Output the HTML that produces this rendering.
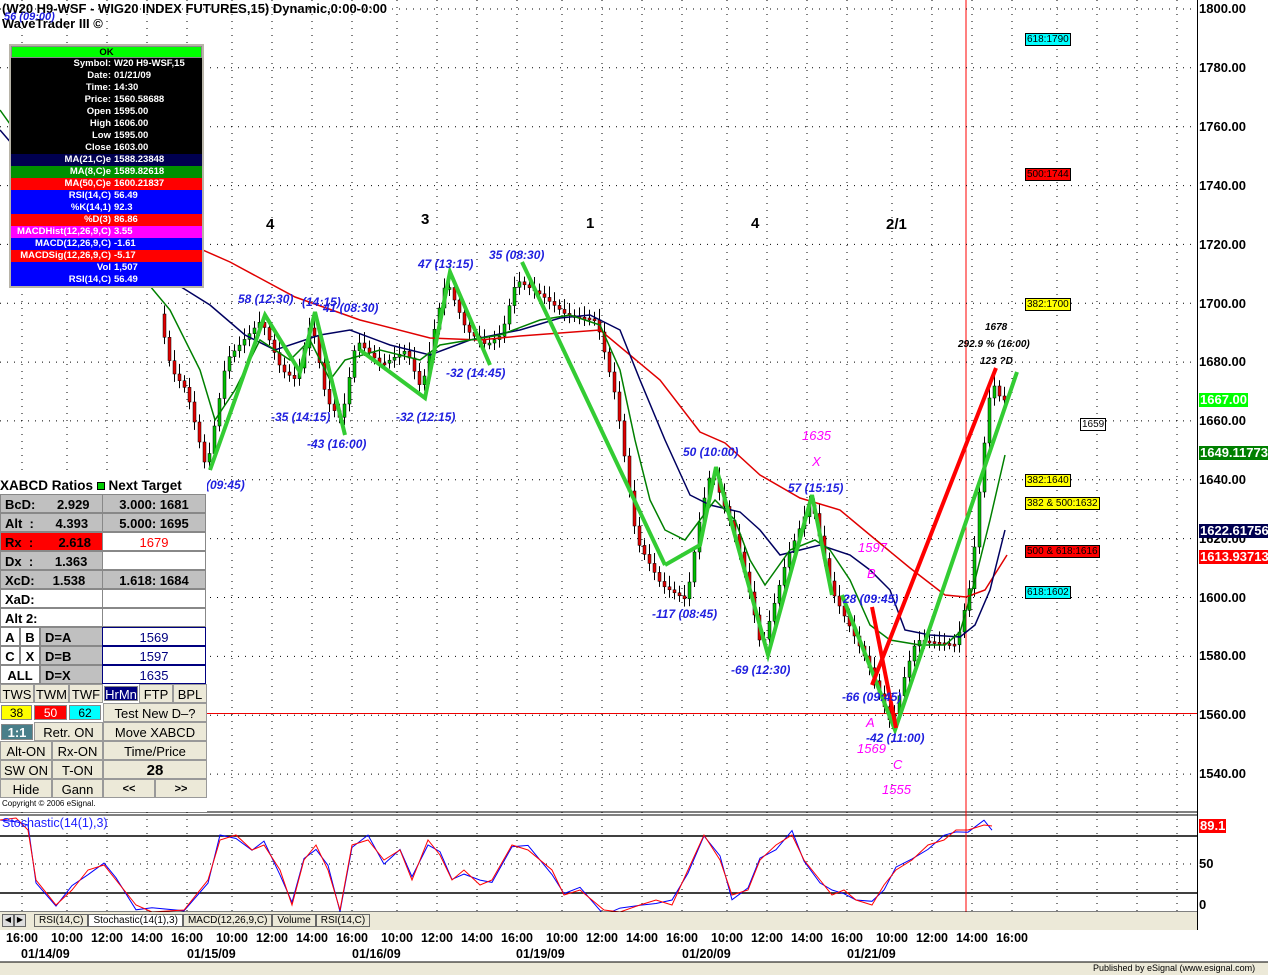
<!DOCTYPE html>
<html><head><meta charset="utf-8"><style>
*{margin:0;padding:0;box-sizing:border-box}
body{width:1268px;height:975px;background:#fff;position:relative;overflow:hidden;font-family:"Liberation Sans",Arial,sans-serif}
.a{position:absolute}
#dw{left:9px;top:44px;width:195px;border:2px solid #b8b4a8;background:#000}
#dw div{height:12px;font-size:9.5px;font-weight:bold;color:#fff;line-height:12px;display:flex}
#dw span.l{width:103px;text-align:right;padding-right:3px}
#xp{left:0;top:476px;width:207px;height:336px;background:#fff;font-size:13px;font-weight:bold}
.r{position:absolute;height:19px;line-height:19px;border:1px solid #888;overflow:hidden;white-space:nowrap}
.g{background:#c0c0c0}
.btn{background:#ece9d8;text-align:center;border:1px solid #999}
.ax{position:absolute;left:1199px;font-size:13px;font-weight:bold;color:#000;line-height:14px}
.tg{position:absolute;font-size:10px;border:1px solid #000;padding:0 1px;line-height:11px}
.bl{position:absolute;color:#1f1fdf;font-style:italic;font-weight:bold;font-size:12px}
.mg{position:absolute;color:#ff00ff;font-style:italic;font-size:13px}
.tl{position:absolute;top:931px;font-size:12.5px;font-weight:bold}
.dl{position:absolute;top:947px;font-size:12.5px;font-weight:bold}
</style></head><body>
<svg class="a" style="left:0;top:0" width="1268" height="975" id="sv">
<line x1="1197.5" y1="0" x2="1197.5" y2="930" stroke="#000"/>
<line x1="0" y1="812" x2="1197" y2="812" stroke="#000"/>
<line x1="0" y1="815" x2="1197" y2="815" stroke="#000"/>
<line x1="0" y1="836" x2="1197" y2="836" stroke="#000" stroke-width="1.5"/>
<line x1="0" y1="893" x2="1197" y2="893" stroke="#000" stroke-width="1.5"/>
<line x1="0" y1="713.5" x2="1197" y2="713.5" stroke="#e00"/>
<line x1="966" y1="0" x2="966" y2="912" stroke="#f00"/>
<g id="grid"></g>
<g id="cd"></g>
<polyline fill="none" stroke="#e00000" stroke-width="1.5" points="180,240 230,262 295,297 360,320 430,338 480,340 520,336 600,330 660,380 700,432 725,443 760,475 800,498 840,510 870,535 910,568 945,595 966,597 985,590 1007,555"/>
<polyline fill="none" stroke="#000060" stroke-width="1.5" points="0,130 60,200 120,255 170,280 210,305 245,335 275,350 320,335 350,330 390,345 430,355 470,340 520,330 560,318 590,315 620,330 640,380 665,440 690,495 710,505 740,512 760,530 780,555 800,550 820,545 850,555 870,570 890,590 905,630 930,635 960,637 975,625 990,590 1005,530"/>
<polyline fill="none" stroke="#008000" stroke-width="1.5" points="0,110 50,180 120,250 170,310 200,370 215,420 235,390 260,340 290,360 310,340 330,380 345,360 380,350 420,360 440,345 470,340 500,335 540,320 570,315 600,325 620,370 635,440 650,500 665,530 685,540 700,520 715,500 735,520 750,560 765,585 790,550 815,540 830,550 850,580 870,625 890,640 920,645 945,645 960,632 975,580 990,520 1005,455"/>
<polyline fill="none" stroke="#33cc33" stroke-width="4" points="210,470 265,315 300,372 315,312 345,435"/>
<polyline fill="none" stroke="#33cc33" stroke-width="4" points="360,350 425,398 450,272 490,365"/>
<polyline fill="none" stroke="#33cc33" stroke-width="4" points="522,262 665,565"/>
<polyline fill="none" stroke="#33cc33" stroke-width="4" points="665,565 700,545 716,467 768,655 812,495 832,595"/>
<polyline fill="none" stroke="#33cc33" stroke-width="4" points="842,595 895,730 1017,372"/>
<polyline fill="none" stroke="#ff0000" stroke-width="4" points="872,685 996,368"/>
<polyline fill="none" stroke="#ff0000" stroke-width="4" points="872,607 896,728"/>
<g id="st"></g>
<line x1="0" y1="912" x2="1197" y2="912" stroke="#000"/>
<rect x="0" y="912" width="1197" height="18" fill="#ece9d8"/>
<rect x="0" y="962" width="1268" height="13" fill="#ece9d8"/>
<line x1="0" y1="962" x2="1268" y2="962" stroke="#000"/>
</svg>
<div class="a" style="left:2px;top:1px;font-size:13px;font-weight:bold">(W20 H9-WSF - WIG20 INDEX FUTURES,15) Dynamic,0:00-0:00</div>
<div class="a" style="left:2px;top:16px;font-size:13px;font-weight:bold">WaveTrader III ©</div>
<div class="bl" style="left:4px;top:11px;font-size:11px">56 (09:00)</div>
<div id="dw" class="a">
<div style="background:#00ff00;color:#000;justify-content:center;border:1px solid #888">OK</div>
<div><span class="l">Symbol:</span>W20 H9-WSF,15</div>
<div><span class="l">Date:</span>01/21/09</div>
<div><span class="l">Time:</span>14:30</div>
<div><span class="l">Price:</span>1560.58688</div>
<div><span class="l">Open</span>1595.00</div>
<div><span class="l">High</span>1606.00</div>
<div><span class="l">Low</span>1595.00</div>
<div><span class="l">Close</span>1603.00</div>
<div style="background:#000050"><span class="l">MA(21,C)e</span>1588.23848</div>
<div style="background:#009000"><span class="l">MA(8,C)e</span>1589.82618</div>
<div style="background:#ff0000"><span class="l">MA(50,C)e</span>1600.21837</div>
<div style="background:#0000ff"><span class="l">RSI(14,C)</span>56.49</div>
<div style="background:#0000ff"><span class="l">%K(14,1)</span>92.3</div>
<div style="background:#ff0000"><span class="l">%D(3)</span>86.86</div>
<div style="background:#ff00ff"><span class="l">MACDHist(12,26,9,C)</span>3.55</div>
<div style="background:#0000ff"><span class="l">MACD(12,26,9,C)</span>-1.61</div>
<div style="background:#ff0000"><span class="l">MACDSig(12,26,9,C)</span>-5.17</div>
<div style="background:#0000ff"><span class="l">Vol</span>1,507</div>
<div style="background:#0000ff"><span class="l">RSI(14,C)</span>56.49</div>
</div>
<div style="position:absolute;left:266px;top:216px;font-size:15px;font-weight:bold">4</div>
<div style="position:absolute;left:421px;top:211px;font-size:15px;font-weight:bold">3</div>
<div style="position:absolute;left:586px;top:215px;font-size:15px;font-weight:bold">1</div>
<div style="position:absolute;left:751px;top:215px;font-size:15px;font-weight:bold">4</div>
<div style="position:absolute;left:886px;top:216px;font-size:15px;font-weight:bold">2/1</div>
<div class="bl" style="left:238px;top:292px">58 (12:30)</div>
<div class="bl" style="left:302px;top:295px">(14:15)</div>
<div class="bl" style="left:323px;top:301px">41 (08:30)</div>
<div class="bl" style="left:418px;top:257px">47 (13:15)</div>
<div class="bl" style="left:489px;top:248px">35 (08:30)</div>
<div class="bl" style="left:446px;top:366px">-32 (14:45)</div>
<div class="bl" style="left:271px;top:410px">-35 (14:15)</div>
<div class="bl" style="left:307px;top:437px">-43 (16:00)</div>
<div class="bl" style="left:396px;top:410px">-32 (12:15)</div>
<div class="bl" style="left:206px;top:478px">(09:45)</div>
<div class="bl" style="left:683px;top:445px">50 (10:00)</div>
<div class="bl" style="left:788px;top:481px">57 (15:15)</div>
<div class="bl" style="left:652px;top:607px">-117 (08:45)</div>
<div class="bl" style="left:731px;top:663px">-69 (12:30)</div>
<div class="bl" style="left:843px;top:592px">28 (09:45)</div>
<div class="bl" style="left:842px;top:690px">-66 (09:45)</div>
<div class="bl" style="left:866px;top:731px">-42 (11:00)</div>
<div class="mg" style="left:802px;top:428px">1635</div>
<div class="mg" style="left:812px;top:454px">X</div>
<div class="mg" style="left:858px;top:540px">1597</div>
<div class="mg" style="left:867px;top:566px">B</div>
<div class="mg" style="left:866px;top:715px">A</div>
<div class="mg" style="left:857px;top:741px">1569</div>
<div class="mg" style="left:893px;top:757px">C</div>
<div class="mg" style="left:882px;top:782px">1555</div>
<div style="position:absolute;left:985px;top:322px;font-size:10px;font-style:italic;font-weight:bold">1678</div>
<div style="position:absolute;left:958px;top:339px;font-size:10px;font-style:italic;font-weight:bold">292.9 % (16:00)</div>
<div style="position:absolute;left:980px;top:356px;font-size:10px;font-style:italic;font-weight:bold">123 ?D</div>
<div class="tg" style="left:1025px;top:33px;background:#00ffff">618:1790</div>
<div class="tg" style="left:1025px;top:168px;background:#ff0000">500:1744</div>
<div class="tg" style="left:1025px;top:298px;background:#ffff00">382:1700</div>
<div class="tg" style="left:1080px;top:418px;background:#fff">1659</div>
<div class="tg" style="left:1025px;top:474px;background:#ffff00">382:1640</div>
<div class="tg" style="left:1025px;top:497px;background:#ffff00">382 &amp; 500:1632</div>
<div class="tg" style="left:1025px;top:545px;background:#ff0000">500 &amp; 618:1616</div>
<div class="tg" style="left:1025px;top:586px;background:#00ffff">618:1602</div>
<div class="ax" style="top:2px">1800.00</div>
<div class="ax" style="top:61px">1780.00</div>
<div class="ax" style="top:120px">1760.00</div>
<div class="ax" style="top:179px">1740.00</div>
<div class="ax" style="top:238px">1720.00</div>
<div class="ax" style="top:297px">1700.00</div>
<div class="ax" style="top:355px">1680.00</div>
<div class="ax" style="top:414px">1660.00</div>
<div class="ax" style="top:473px">1640.00</div>
<div class="ax" style="top:532px">1620.00</div>
<div class="ax" style="top:591px">1600.00</div>
<div class="ax" style="top:649px">1580.00</div>
<div class="ax" style="top:708px">1560.00</div>
<div class="ax" style="top:767px">1540.00</div>
<div class="ax" style="top:393px;background:#00ff00;color:#fff;padding:0 1px">1667.00</div>
<div class="ax" style="top:446px;background:#008000;color:#fff;padding:0 1px;width:69px">1649.11773</div>
<div class="ax" style="top:524px;background:#000050;color:#fff;padding:0 1px;width:69px">1622.61756</div>
<div class="ax" style="top:550px;background:#ff0000;color:#fff;padding:0 1px;width:69px">1613.93713</div>
<div class="ax" style="top:819px;background:#ff0000;color:#fff;padding:0 1px">89.1</div>
<div class="ax" style="top:857px">50</div>
<div class="ax" style="top:898px">0</div>
<div class="a" style="left:2px;top:816px;color:#2020ff;font-size:12.5px">Stochastic(14(1),3)</div>
<div id="xp" class="a">
<div class="r" style="left:0;top:0;width:207px;border:none;font-size:13.5px">XABCD Ratios <span style="display:inline-block;width:8px;height:8px;background:#0c0;border:1px solid #000"></span> Next Target</div>
<div class="r g" style="left:0;top:18px;width:103px;padding-left:4px">BcD:&nbsp;&nbsp;&nbsp;&nbsp;&nbsp; 2.929</div><div class="r g" style="left:102px;top:18px;width:104px;text-align:center">3.000: 1681</div>
<div class="r g" style="left:0;top:37px;width:103px;padding-left:4px">Alt&nbsp; :&nbsp;&nbsp;&nbsp;&nbsp;&nbsp; 4.393</div><div class="r g" style="left:102px;top:37px;width:104px;text-align:center">5.000: 1695</div>
<div class="r" style="left:0;top:56px;width:103px;padding-left:4px;background:#f00">Rx&nbsp; :&nbsp;&nbsp;&nbsp;&nbsp;&nbsp;&nbsp; 2.618</div><div class="r" style="left:102px;top:56px;width:104px;text-align:center;color:#f00;font-weight:normal">1679</div>
<div class="r g" style="left:0;top:75px;width:103px;padding-left:4px">Dx&nbsp; :&nbsp;&nbsp;&nbsp;&nbsp;&nbsp; 1.363</div><div class="r" style="left:102px;top:75px;width:104px"></div>
<div class="r g" style="left:0;top:94px;width:103px;padding-left:4px">XcD:&nbsp;&nbsp;&nbsp;&nbsp; 1.538</div><div class="r g" style="left:102px;top:94px;width:104px;text-align:center">1.618: 1684</div>
<div class="r" style="left:0;top:113px;width:103px;padding-left:4px">XaD:</div><div class="r" style="left:102px;top:113px;width:104px"></div>
<div class="r" style="left:0;top:132px;width:103px;padding-left:4px">Alt 2:</div><div class="r" style="left:102px;top:132px;width:104px"></div>
<div class="r" style="left:0;top:151px;width:20px;text-align:center">A</div><div class="r" style="left:20px;top:151px;width:20px;text-align:center">B</div><div class="r g" style="left:40px;top:151px;width:63px;padding-left:4px">D=A</div><div class="r" style="left:102px;top:151px;width:104px;text-align:center;color:#000080;font-weight:normal;border-color:#000080">1569</div>
<div class="r" style="left:0;top:170px;width:20px;text-align:center">C</div><div class="r" style="left:20px;top:170px;width:20px;text-align:center">X</div><div class="r g" style="left:40px;top:170px;width:63px;padding-left:4px">D=B</div><div class="r" style="left:102px;top:170px;width:104px;text-align:center;color:#000080;font-weight:normal;border-color:#000080">1597</div>
<div class="r" style="left:0;top:189px;width:40px;text-align:center">ALL</div><div class="r g" style="left:40px;top:189px;width:63px;padding-left:4px">D=X</div><div class="r" style="left:102px;top:189px;width:104px;text-align:center;color:#000080;font-weight:normal;border-color:#000080">1635</div>
<div class="r btn" style="left:0;top:208px;width:34px;font-weight:normal">TWS</div><div class="r btn" style="left:34px;top:208px;width:35px;font-weight:normal">TWM</div><div class="r btn" style="left:69px;top:208px;width:34px;font-weight:normal">TWF</div><div class="r" style="left:104px;top:210px;width:34px;height:15px;line-height:15px;background:#000080;color:#fff;font-weight:normal;text-align:center">HrMn</div><div class="r btn" style="left:139px;top:208px;width:34px;font-weight:normal">FTP</div><div class="r btn" style="left:173px;top:208px;width:34px;font-weight:normal">BPL</div>
<div class="r" style="left:1px;top:229px;width:31px;height:15px;line-height:15px;background:#ff0;text-align:center;font-weight:normal;font-size:12px">38</div><div class="r" style="left:34px;top:229px;width:33px;height:15px;line-height:15px;background:#f00;color:#fff;text-align:center;font-weight:normal;font-size:12px">50</div><div class="r" style="left:69px;top:229px;width:32px;height:15px;line-height:15px;background:#0ff;text-align:center;font-weight:normal;font-size:12px">62</div><div class="r btn" style="left:103px;top:227px;width:104px;font-weight:normal">Test New D–?</div>
<div class="r" style="left:1px;top:248px;width:32px;height:16px;line-height:16px;background:#4a7f8a;color:#fff;text-align:center">1:1</div><div class="r btn" style="left:34px;top:246px;width:69px;font-weight:normal">Retr. ON</div><div class="r btn" style="left:103px;top:246px;width:104px;font-weight:normal">Move XABCD</div>
<div class="r btn" style="left:0;top:265px;width:52px;font-weight:normal">Alt-ON</div><div class="r btn" style="left:52px;top:265px;width:51px;font-weight:normal">Rx-ON</div><div class="r btn" style="left:103px;top:265px;width:104px;font-weight:normal">Time/Price</div>
<div class="r btn" style="left:0;top:284px;width:52px;font-weight:normal">SW ON</div><div class="r btn" style="left:52px;top:284px;width:51px;font-weight:normal">T-ON</div><div class="r btn" style="left:103px;top:284px;width:104px;font-size:15px">28</div>
<div class="r btn" style="left:0;top:303px;width:52px;font-weight:normal">Hide</div><div class="r btn" style="left:52px;top:303px;width:51px;font-weight:normal">Gann</div><div class="r btn" style="left:103px;top:303px;width:52px;font-size:11px">&lt;&lt;</div><div class="r btn" style="left:155px;top:303px;width:52px;font-size:11px">&gt;&gt;</div>
<div class="a" style="left:2px;top:323px;font-size:8px;font-weight:normal">Copyright © 2006 eSignal.</div>
</div>
<div class="a" style="left:2px;top:914px;font-size:10px;display:flex;gap:0">
<span style="border:1px solid #666;width:12px;height:13px;background:#ddd;font-size:8px;text-align:center">◀</span><span style="border:1px solid #666;width:12px;height:13px;background:#ddd;font-size:8px;text-align:center">▶</span>
<span style="border:1px solid #666;padding:0 4px;margin-left:8px">RSI(14,C)</span><span style="border:1px solid #666;padding:0 4px;background:#fff">Stochastic(14(1),3)</span><span style="border:1px solid #666;padding:0 4px">MACD(12,26,9,C)</span><span style="border:1px solid #666;padding:0 4px">Volume</span><span style="border:1px solid #666;padding:0 4px">RSI(14,C)</span></div>
<div class="tl" style="left:6px">16:00</div><div class="tl" style="left:51px">10:00</div><div class="tl" style="left:91px">12:00</div><div class="tl" style="left:131px">14:00</div><div class="tl" style="left:171px">16:00</div><div class="tl" style="left:216px">10:00</div><div class="tl" style="left:256px">12:00</div><div class="tl" style="left:296px">14:00</div><div class="tl" style="left:336px">16:00</div><div class="tl" style="left:381px">10:00</div><div class="tl" style="left:421px">12:00</div><div class="tl" style="left:461px">14:00</div><div class="tl" style="left:501px">16:00</div><div class="tl" style="left:546px">10:00</div><div class="tl" style="left:586px">12:00</div><div class="tl" style="left:626px">14:00</div><div class="tl" style="left:666px">16:00</div><div class="tl" style="left:711px">10:00</div><div class="tl" style="left:751px">12:00</div><div class="tl" style="left:791px">14:00</div><div class="tl" style="left:831px">16:00</div><div class="tl" style="left:876px">10:00</div><div class="tl" style="left:916px">12:00</div><div class="tl" style="left:956px">14:00</div><div class="tl" style="left:996px">16:00</div>
<div class="dl" style="left:21px">01/14/09</div><div class="dl" style="left:187px">01/15/09</div><div class="dl" style="left:352px">01/16/09</div><div class="dl" style="left:516px">01/19/09</div><div class="dl" style="left:682px">01/20/09</div><div class="dl" style="left:847px">01/21/09</div>
<div class="a" style="left:1093px;top:963px;font-size:9px">Published by eSignal (www.esignal.com)</div>
<script>
var g=document.getElementById('grid'),h='';
var vx=[22,67,107,147,187,232,272,312,352,397,437,477,517,562,602,642,682,727,767,807,847,892,932,972,1012,1057,1097,1137,1177];
for(var i=0;i<14;i++){var y=(9+i*58.85).toFixed(1);h+='<line x1="0" y1="'+y+'" x2="1197" y2="'+y+'" stroke="#000" stroke-dasharray="1,6"/>';}
h+='<line x1="0" y1="864" x2="1197" y2="864" stroke="#000" stroke-dasharray="1,6"/>';
vx.forEach(function(x){h+='<line x1="'+x+'" y1="0" x2="'+x+'" y2="912" stroke="#000" stroke-dasharray="1,6"/>';});
g.innerHTML=h;
var P=[[160,300],[175,370],[190,390],[210,470],[230,360],[265,320],[285,370],[300,380],[315,320],[330,400],[345,420],[360,340],[385,365],[410,350],[425,390],[440,320],[450,280],[470,330],[490,345],[505,335],[520,280],[545,295],[570,315],[600,320],[620,400],[640,540],[665,585],[690,600],[705,510],[715,470],[740,540],[755,600],[765,650],[790,560],[815,500],[835,590],[850,620],[870,660],[895,725],[910,670],[920,640],[960,645],[975,580],[985,470],[995,380],[1005,400],[1015,400]];
function py(x){for(var i=0;i<P.length-1;i++){if(x>=P[i][0]&&x<=P[i+1][0]){var t=(x-P[i][0])/(P[i+1][0]-P[i][0]);return P[i][1]+t*(P[i+1][1]-P[i][1]);}}return P[P.length-1][1];}
var c='';for(var x=163;x<=1003;x+=5){var y=py(x),y2=py(x+5),s=Math.sin(x*1.7)*6;var lo=Math.min(y,y2),hi=Math.max(y,y2);var wt=lo-5-Math.abs(s),wb=hi+5+Math.abs(s)*0.5;var up=y2<y;
c+='<rect x="'+(x+1)+'" y="'+wt.toFixed(1)+'" width="1" height="'+(wb-wt).toFixed(1)+'" fill="#000"/>';
c+='<rect x="'+x+'" y="'+lo.toFixed(1)+'" width="3" height="'+Math.max(2,hi-lo).toFixed(1)+'" fill="'+(up?'#00c000':'#e00000')+'" stroke="#000" stroke-width="0.5"/>';}
document.getElementById('cd').innerHTML=c;
var S=[[0,820],[20,818],[35,830],[45,880],[70,905],[90,890],[110,870],[130,865],[145,880],[170,905],[190,912],[230,910],[260,880],[275,840],[295,835],[315,850],[330,845],[350,870],[365,905],[380,860],[395,845],[410,870],[425,910],[440,845],[460,840],[480,860],[500,850],[515,880],[535,840],[550,855],[565,880],[580,870],[600,885],[615,880],[640,845],[660,850],[690,870],[705,895],[725,890],[755,910],[775,912],[800,905],[820,900],[840,905],[860,870],[880,835],[900,860],[915,895],[935,890],[950,860],[970,845],[990,835],[1005,860],[1025,880],[1040,895],[1055,890],[1070,900],[1090,905],[1105,885],[1120,870],[1140,860],[1160,845],[1180,840],[1195,830],[1210,830],[1230,825],[1240,826]];
function pts(o){return S.map(function(p,i){return (p[0]*0.8).toFixed(1)+','+(p[1]+(o?Math.sin(i*2.3)*5:0)).toFixed(1)}).join(' ');}
document.getElementById('st').innerHTML='<polyline fill="none" stroke="#0000ff" points="'+pts(1)+'"/><polyline fill="none" stroke="#ff0000" points="'+pts(0)+'"/>';
</script>
</body></html>
